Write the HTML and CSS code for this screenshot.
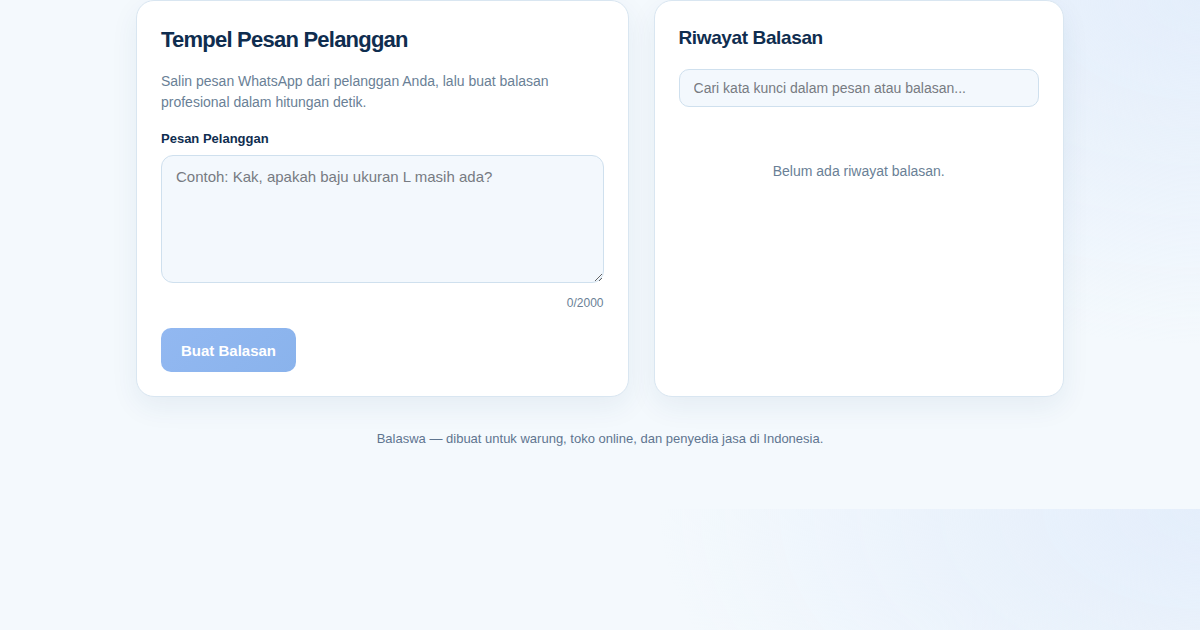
FILE: index.html
```html
<!DOCTYPE html>
<html lang="id">
<head>
<meta charset="utf-8">
<title>Balaswa</title>
<link rel="stylesheet" href="styles.css">
</head>
<body>
<main class="page">
  <div class="grid">
    <section class="card card-compose">
      <h1 class="title">Tempel Pesan Pelanggan</h1>
      <p class="desc">Salin pesan WhatsApp dari pelanggan Anda, lalu buat balasan profesional dalam hitungan detik.</p>
      <label class="label" for="msg">Pesan Pelanggan</label>
      <textarea id="msg" class="textarea" placeholder="Contoh: Kak, apakah baju ukuran L masih ada?"></textarea>
      <div class="counter">0/2000</div>
      <button class="btn" disabled>Buat Balasan</button>
    </section>
    <section class="card card-history">
      <h2 class="title-sm">Riwayat Balasan</h2>
      <input class="search" type="text" placeholder="Cari kata kunci dalam pesan atau balasan...">
      <p class="empty">Belum ada riwayat balasan.</p>
    </section>
  </div>
  <footer class="footer">Balaswa — dibuat untuk warung, toko online, dan penyedia jasa di Indonesia.</footer>
</main>
</body>
</html>
```

FILE: styles.css
```css
* { box-sizing: border-box; }
body {
  margin: 0;
  font-family: "Liberation Sans", Arial, sans-serif;
  color: #0f2d4f;
  background:
    radial-gradient(ellipse 60% 90% at 100% 0%, #e4eefb 0%, rgba(228,238,251,0.6) 35%, rgba(244,249,253,0) 75%),
    #f4f9fd;
}
.page {
  max-width: 976px;
  margin: 0 auto;
  padding: 0 24px 60px;
}
.grid {
  display: grid;
  grid-template-columns: 1.2fr 1fr;
  gap: 25px;
}
.card {
  background: #ffffff;
  border: 1px solid #d9e6f1;
  border-radius: 18px;
  box-shadow: 0 10px 28px rgba(30, 70, 120, 0.07);
  padding: 23px 24px 24px;
}
.title {
  margin: 0;
  font-size: 22px;
  line-height: 32px;
  font-weight: 700;
  letter-spacing: -0.035em;
  color: #0f2d4f;
}
.desc {
  margin: 15px 0 0;
  font-size: 14px;
  line-height: 21px;
  color: #6a7f96;
}
.label {
  display: block;
  margin-top: 17px;
  font-size: 13px;
  line-height: 18px;
  font-weight: 700;
  color: #0f2d4f;
}
.textarea {
  display: block;
  width: 100%;
  height: 128px;
  margin-top: 7px;
  padding: 10px 14px;
  border: 1px solid #cfe0ee;
  border-radius: 12px;
  background: #f3f8fd;
  font-family: "Liberation Sans", Arial, sans-serif;
  font-size: 15px;
  line-height: 22px;
  color: #0f2d4f;
  resize: vertical;
  outline: none;
}
.textarea::placeholder, .search::placeholder { color: #777b82; opacity: 1; }
.counter {
  margin-top: 12px;
  text-align: right;
  font-size: 12px;
  line-height: 16px;
  color: #6a7f96;
}
.btn {
  display: block;
  margin-top: 17px;
  height: 44px;
  padding: 0 20px;
  border: none;
  border-radius: 10px;
  background: linear-gradient(135deg, #92b8f1, #8ab3ec);
  color: #ffffff;
  font-family: "Liberation Sans", Arial, sans-serif;
  font-size: 15px;
  font-weight: 700;
}
.title-sm {
  margin: 2px 0 0;
  font-size: 19px;
  line-height: 24px;
  font-weight: 700;
  letter-spacing: -0.02em;
  color: #0f2d4f;
}
.search {
  display: block;
  width: 100%;
  height: 38px;
  margin-top: 19px;
  padding: 0 14px;
  border: 1px solid #cfe0ee;
  border-radius: 10px;
  background: #f3f8fd;
  font-family: "Liberation Sans", Arial, sans-serif;
  font-size: 14px;
  color: #0f2d4f;
  outline: none;
}
.empty {
  margin: 54px 0 0;
  text-align: center;
  font-size: 14px;
  line-height: 20px;
  color: #6a7f96;
}
.footer {
  margin-top: 32px;
  text-align: center;
  font-size: 13px;
  line-height: 20px;
  color: #5f7590;
}
```
